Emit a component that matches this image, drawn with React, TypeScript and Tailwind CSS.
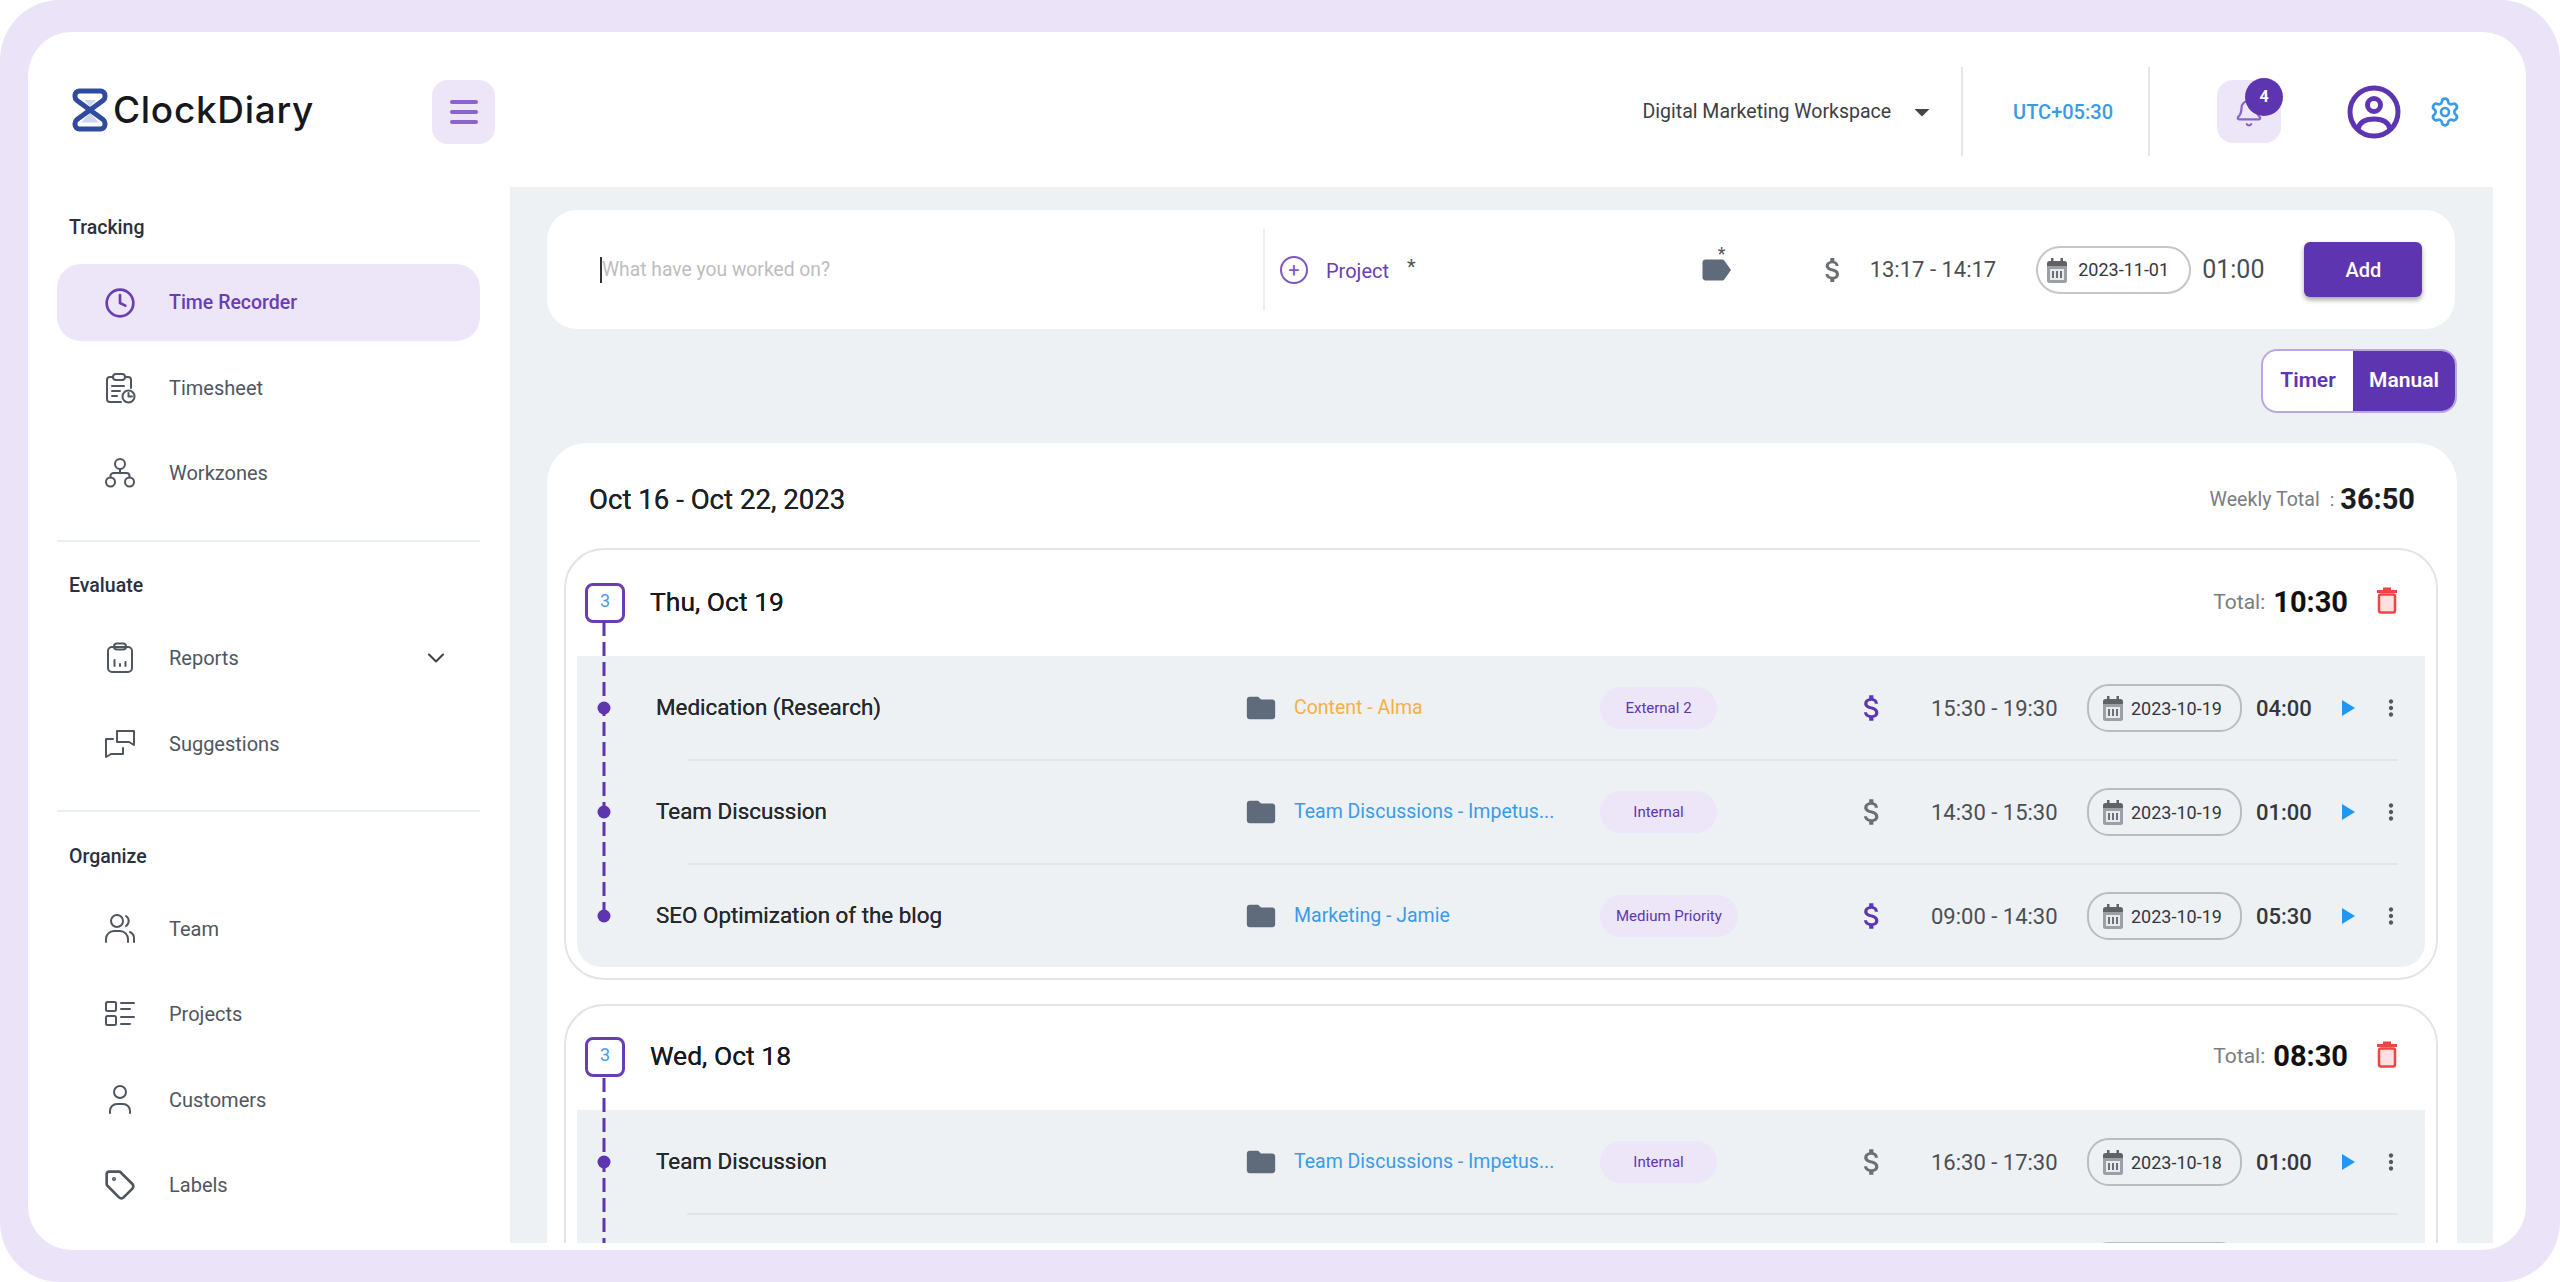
import { Bell, ChevronDown, Clock, Settings, Tag } from "lucide-react"
import { MdArrowDropDown, MdAttachMoney, MdFolder, MdLabel, MdMoreVert } from "react-icons/md"
import type { ReactNode } from "react"

function Logo() {
  return (
    <svg width="36" height="44" viewBox="0 0 36 44" fill="none">
      <path d="M12 12h12l-6 6.500ZM18 25l9 9.500H9Z" fill="#ccd6ee" />
      <path
        d="M7.500 3h21A4.500 4.500 0 0 1 33 7.500v1a5 5 0 0 1-1.700 3.700L4.700 31.800A5 5 0 0 0 3 35.500v1A4.500 4.500 0 0 0 7.500 41h21a4.500 4.500 0 0 0 4.500-4.500v-1a5 5 0 0 0-1.700-3.700L4.700 12.200A5 5 0 0 1 3 8.500v-1A4.500 4.500 0 0 1 7.500 3Z"
        stroke="#2f4a9e"
        strokeWidth="5"
        strokeLinejoin="round"
      />
    </svg>
  )
}

const stroke = { fill: "none", stroke: "currentColor", strokeWidth: 2, strokeLinecap: "round" as const, strokeLinejoin: "round" as const }

function TimesheetIcon() {
  return (
    <svg width="32" height="32" viewBox="0 0 32 32" {...stroke}>
      <path d="M9 5H6a3 3 0 0 0-3 3v19a3 3 0 0 0 3 3h11M21 5h3a3 3 0 0 1 3 3v8" />
      <rect x="9" y="2" width="12" height="6" rx="3" />
      <path d="M8 14h12M8 19h8M8 24h5" />
      <circle cx="24.500" cy="24.500" r="6" />
      <path d="M24.500 21v3.500h3.500" />
    </svg>
  )
}

function WorkzonesIcon() {
  return (
    <svg width="32" height="32" viewBox="0 0 32 32" {...stroke}>
      <circle cx="16" cy="7" r="5" />
      <circle cx="6.500" cy="25" r="4.500" />
      <circle cx="25.500" cy="25" r="4.500" />
      <path d="M16 12v4M6.500 20.500V19a3 3 0 0 1 3-3h13a3 3 0 0 1 3 3v1.500" />
    </svg>
  )
}

function ReportsIcon() {
  return (
    <svg width="32" height="32" viewBox="0 0 32 32" {...stroke}>
      <rect x="4" y="5" width="24" height="25" rx="4" />
      <rect x="10" y="1.500" width="12" height="6" rx="3" />
      <path d="M10.500 18v6M16 22v2M21.500 20v4" />
    </svg>
  )
}

function SuggestionsIcon() {
  return (
    <svg width="32" height="32" viewBox="0 0 32 32" {...stroke}>
      <path d="M13 3h17v14l-5-3H13Z" />
      <path d="M9 11H2v18l5-3h12v-6" />
    </svg>
  )
}

function TeamIcon() {
  return (
    <svg width="32" height="32" viewBox="0 0 32 32" {...stroke}>
      <circle cx="13" cy="8" r="6" />
      <path d="M2 29v-3a8 8 0 0 1 8-8h6a8 8 0 0 1 8 8v3M22 3a6 6 0 0 1 0 10M26 19a7 7 0 0 1 4 7v3" />
    </svg>
  )
}

function ProjectsIcon() {
  return (
    <svg width="32" height="32" viewBox="0 0 32 32" {...stroke}>
      <rect x="2" y="4" width="10" height="9" rx="1.500" />
      <rect x="2" y="18" width="10" height="9" rx="1.500" />
      <path d="M17 5h13M17 11h9M17 19h13M17 26h9" />
    </svg>
  )
}

function CustomerIcon() {
  return (
    <svg width="32" height="32" viewBox="0 0 32 32" {...stroke}>
      <circle cx="16" cy="8" r="6" />
      <path d="M6 29v-2a7 7 0 0 1 7-7h6a7 7 0 0 1 7 7v2" />
    </svg>
  )
}

function AvatarIcon() {
  return (
    <svg width="54" height="54" viewBox="0 0 54 54" fill="none" stroke="#5e35b1" strokeWidth="5">
      <circle cx="27" cy="27" r="24" />
      <circle cx="27" cy="20" r="6.500" />
      <path d="M11 44c1.500-7 8-10 16-10s14.500 3 16 10" />
    </svg>
  )
}

function CalendarIcon() {
  return (
    <svg width="20" height="26" viewBox="0 0 20 26" className="shrink-0">
      <path d="M4 1h2.500v3h7V1H16v3h1.500A2.500 2.500 0 0 1 20 6.500V9H0V6.500A2.500 2.500 0 0 1 2.500 4H4Z" fill="#5f6368" />
      <path d="M0 9h20v14.500a2.500 2.500 0 0 1-2.500 2.500h-15A2.500 2.500 0 0 1 0 23.500Z" fill="#9aa0a6" />
      <path d="M3 12h14v11H3Z" fill="#e8eaed" />
      <path d="M5 14h2v7H5ZM9 14h2v7H9ZM13 14h2v7h-2Z" fill="#6b7076" />
    </svg>
  )
}

function TrashIcon() {
  return (
    <svg width="22" height="28" viewBox="0 0 22 28">
      <path d="M7 1.500h8V4h6v3H1V4h6Z" fill="#ef4444" />
      <rect x="3" y="8.500" width="16" height="18" rx="2" fill="#fde0df" stroke="#ef4444" strokeWidth="2.500" />
    </svg>
  )
}

function NavItem({ icon, label, active, chevron }: { icon: ReactNode; label: string; active?: boolean; chevron?: boolean }) {
  return (
    <div
      className={
        active
          ? "flex h-[77px] items-center rounded-[24px] bg-[#ece6f8] pl-[47px] text-[#6a3db5]"
          : "flex h-[77px] items-center rounded-[24px] pl-[47px] text-[#50565f]"
      }
    >
      <span className="flex w-[32px] justify-center">{icon}</span>
      <span className={active ? "ml-[33px] text-[19.500px] leading-[28px] font-medium" : "ml-[33px] text-[20px] leading-[28px]"}>{label}</span>
      {chevron && <ChevronDown size={28} strokeWidth={1.8} className="mr-[30px] ml-auto text-[#444]" />}
    </div>
  )
}

function Sidebar() {
  return (
    <aside className="flex w-[482px] shrink-0 flex-col overflow-hidden pr-[30px] pl-[29px]">
      <div className="mt-[26px] mb-[21px] pl-[12px] text-[19.500px] leading-[30px] font-medium text-[#2a3040]">Tracking</div>
      <div className="flex flex-col gap-[8px]">
        <NavItem active icon={<Clock size={32} strokeWidth={2} />} label="Time Recorder" />
        <NavItem icon={<TimesheetIcon />} label="Timesheet" />
        <NavItem icon={<WorkzonesIcon />} label="Workzones" />
      </div>
      <div className="mt-[29px] h-[2px] bg-[#eceff1]" />
      <div className="mt-[29px] mb-[18px] pl-[12px] text-[19.500px] leading-[30px] font-medium text-[#2a3040]">Evaluate</div>
      <div className="flex flex-col gap-[9px]">
        <NavItem chevron icon={<ReportsIcon />} label="Reports" />
        <NavItem icon={<SuggestionsIcon />} label="Suggestions" />
      </div>
      <div className="mt-[28px] h-[2px] bg-[#eceff1]" />
      <div className="mt-[30px] mb-[18px] pl-[12px] text-[19.500px] leading-[30px] font-medium text-[#2a3040]">Organize</div>
      <div className="flex flex-col gap-[8.500px]">
        <NavItem icon={<TeamIcon />} label="Team" />
        <NavItem icon={<ProjectsIcon />} label="Projects" />
        <NavItem icon={<CustomerIcon />} label="Customers" />
        <NavItem icon={<Tag size={32} strokeWidth={2} />} label="Labels" />
      </div>
    </aside>
  )
}

function TopBar() {
  return (
    <header className="flex h-[155px] shrink-0 items-center pt-[4px] pr-[65px] pl-[44px]">
      <span className="-mt-[4px]">
        <Logo />
      </span>
      <span className="-mt-[4px] ml-[5px] w-[198px] font-['Inter',sans-serif] text-[37px] leading-none font-medium tracking-[0.7px] whitespace-nowrap text-[#16181d]">ClockDiary</span>
      <button className="ml-[121px] flex h-[64px] w-[63px] items-center justify-center rounded-[16px] bg-[#ece6f8]">
        <span className="flex w-[28px] flex-col gap-[6px]">
          <span className="h-[4px] rounded-full bg-[#8a63cc]" />
          <span className="h-[4px] rounded-full bg-[#8a63cc]" />
          <span className="h-[4px] rounded-full bg-[#8a63cc]" />
        </span>
      </button>
      <span className="ml-auto text-[19.500px] text-[#3c4043]">Digital Marketing Workspace</span>
      <MdArrowDropDown size={36} className="ml-[13px] text-[#444]" />
      <span className="ml-[21px] h-[89px] w-[2px] bg-[#e4e6e8]" />
      <span className="ml-[50px] text-[20px] font-medium text-[#3b9ae8]">UTC+05:30</span>
      <span className="ml-[35px] h-[89px] w-[2px] bg-[#e4e6e8]" />
      <div className="relative ml-[67px] flex h-[63px] w-[64px] items-center justify-center rounded-[16px] bg-[#ece6f8]">
        <Bell size={30} strokeWidth={1.8} className="mt-[2px] text-[#8a63cc]" />
        <span className="absolute -top-[2px] left-[28px] flex h-[38px] w-[38px] items-center justify-center rounded-full bg-[#5e35b1] text-[16px] font-bold text-white">4</span>
      </div>
      <span className="ml-[66px]">
        <AvatarIcon />
      </span>
      <Settings size={32} strokeWidth={2} className="ml-[28px] text-[#3b9ae8]" />
    </header>
  )
}

function DatePill({ date }: { date: string }) {
  return (
    <div className="flex h-[48px] w-[155px] shrink-0 items-center rounded-[22px] border-2 border-[#b9bcc0] pl-[14px]">
      <CalendarIcon />
      <span className="ml-[8px] text-[18px] text-[#33373b]">{date}</span>
    </div>
  )
}

function EntryBar() {
  return (
    <div className="mt-[23px] mr-[38px] ml-[37px] flex h-[119px] shrink-0 items-center rounded-[30px] bg-white pl-[53px] text-[#4a4e53]">
      <div className="flex w-[663px] items-center">
        <span className="h-[26px] w-[2px] bg-[#333]" />
        <span className="mt-[2px] text-[19.300px] text-[#bdbdbd]">What have you worked on?</span>
      </div>
      <span className="h-[81px] w-[2px] bg-[#eceef0]" />
      <span className="ml-[15px] flex h-[28px] w-[28px] items-center justify-center rounded-full border-2 border-[#7e57c2] text-[20px] leading-none text-[#7e57c2]">+</span>
      <span className="mt-[2px] ml-[18px] text-[20px] text-[#6a3db5]">Project</span>
      <span className="mb-[6px] ml-[18px] text-[20px] text-[#555]">*</span>
      <div className="relative ml-[282px]">
        <MdLabel size={36} className="text-[#5f6b7a]" />
        <span className="absolute -top-[12px] left-[20px] text-[18px] text-[#555]">*</span>
      </div>
      <MdAttachMoney size={32} className="ml-[83px] text-[#6b6f73]" />
      <span className="ml-[21px] text-[22px] whitespace-nowrap">13:17 - 14:17</span>
      <div className="ml-[40px] flex h-[48px] w-[155px] shrink-0 items-center rounded-[24px] border-2 border-[#c4c6c9] pl-[9px]">
        <CalendarIcon />
        <span className="ml-[11px] text-[18px] text-[#33373b]">2023-11-01</span>
      </div>
      <span className="ml-[11px] text-[25px]">01:00</span>
      <button className="ml-[40px] h-[55px] w-[118px] rounded-[6px] bg-[#5e35b1] text-[20px] font-medium text-white shadow-[0_3px_5px_rgba(0,0,0,0.35)]">Add</button>
    </div>
  )
}

function ModeToggle() {
  return (
    <div className="mt-[20px] mr-[36px] flex h-[64px] w-[196px] shrink-0 self-end overflow-hidden rounded-[16px] border-2 border-[#b9a7e0] bg-white text-[21px] font-semibold">
      <span className="flex w-[90px] items-center justify-center text-[#5e35b1]">Timer</span>
      <span className="flex flex-1 items-center justify-center bg-[#5e35b1] text-white">Manual</span>
    </div>
  )
}

type Entry = { title: string; project: string; projectColor: string; tag: string; billable: boolean; time: string; date: string; duration: string }

function EntryRow({ e }: { e: Entry }) {
  return (
    <div className="flex h-[102px] items-center">
      <span className="ml-[79px] w-[591px] shrink-0 text-[22.400px] text-[#26292c] [text-shadow:0_0_0.5px_#26292c]">{e.title}</span>
      <MdFolder size={34} className="-ml-[3px] shrink-0 text-[#5f6b7a]" />
      <span className={"ml-[16px] w-[306px] shrink-0 text-[19.500px] " + e.projectColor}>{e.project}</span>
      <div className="w-[257px] shrink-0">
        <span className="inline-flex h-[42px] min-w-[117px] items-center justify-center rounded-[21px] bg-[#ece6f8] px-[16px] text-[15px] text-[#5e35b1]">{e.tag}</span>
      </div>
      <MdAttachMoney size={34} className={e.billable ? "-ml-[2px] shrink-0 text-[#5e35b1]" : "-ml-[2px] shrink-0 text-[#6b6f73]"} />
      <span className="ml-[42px] w-[128px] shrink-0 text-[22px] whitespace-nowrap text-[#4a4e53]">{e.time}</span>
      <span className="ml-[28px]">
        <DatePill date={e.date} />
      </span>
      <span className="ml-[14px] w-[56px] shrink-0 text-[22px] font-medium text-[#33373b]">{e.duration}</span>
      <svg width="13" height="16" viewBox="0 0 13 16" className="ml-[30px] shrink-0">
        <path d="M0 0 13 8 0 16Z" fill="#2196f3" />
      </svg>
      <MdMoreVert size={26} className="ml-[23px] shrink-0 text-[#55595e]" />
    </div>
  )
}

function Timeline({ dots, height }: { dots: number[]; height: number }) {
  return (
    <svg width="14" height={height + 8} className="absolute top-[72px] left-[31px]">
      <line x1="7" y1="0" x2="7" y2={height} stroke="#5e35b1" strokeWidth="3" strokeDasharray="14 6" />
      {dots.map((d) => (
        <circle key={d} cx="7" cy={d} r="6.500" fill="#5e35b1" />
      ))}
    </svg>
  )
}

const thuEntries: Entry[] = [
  { title: "Medication (Research)", project: "Content - Alma", projectColor: "text-[#f5b042]", tag: "External 2", billable: true, time: "15:30 - 19:30", date: "2023-10-19", duration: "04:00" },
  { title: "Team Discussion", project: "Team Discussions - Impetus...", projectColor: "text-[#3b9ae8]", tag: "Internal", billable: false, time: "14:30 - 15:30", date: "2023-10-19", duration: "01:00" },
  { title: "SEO Optimization of the blog", project: "Marketing - Jamie", projectColor: "text-[#3b9ae8]", tag: "Medium Priority", billable: true, time: "09:00 - 14:30", date: "2023-10-19", duration: "05:30" },
]

const wedEntry: Entry = { title: "Team Discussion", project: "Team Discussions - Impetus...", projectColor: "text-[#3b9ae8]", tag: "Internal", billable: false, time: "16:30 - 17:30", date: "2023-10-18", duration: "01:00" }

function DayHeader({ title, total }: { title: string; total: string }) {
  return (
    <>
      <span className="ml-[19px] flex h-[40px] w-[40px] shrink-0 items-start justify-center rounded-[8px] border-[3px] border-[#6a3db5] bg-white text-[18px] leading-[30px] text-[#4d9be8]">3</span>
      <span className="ml-[25px] text-[26.500px] leading-[38px] text-[#17191c] [text-shadow:0_0_0.5px_#17191c]">{title}</span>
      <span className="ml-auto text-[21px] leading-[38px] text-[#7a7d80]">Total:</span>
      <span className="ml-[8px] text-[29px] leading-[38px] font-bold text-[#111]">{total}</span>
      <span className="mt-[3px] mr-[38px] ml-[28px]">
        <TrashIcon />
      </span>
    </>
  )
}

export default function App() {
  return (
    <div className="h-[1282px] w-[2560px] overflow-hidden bg-white font-['Roboto',sans-serif]">
      <div className="h-full rounded-[60px] bg-[#ebe4f8] pt-[32px] pr-[34px] pb-[32px] pl-[28px]">
        <div className="flex h-full flex-col overflow-hidden rounded-[44px] bg-white">
          <TopBar />
          <div className="flex min-h-0 flex-1">
            <Sidebar />
            <main className="mr-[33px] mb-[7px] flex min-h-0 flex-1 flex-col overflow-hidden bg-[#edf1f4]">
              <EntryBar />
              <ModeToggle />
              <section className="mt-[30px] mr-[36px] ml-[37px] min-h-0 flex-1 overflow-hidden rounded-t-[40px] bg-white">
                <div className="flex h-[105px] items-center pt-[9px] pr-[42px] pl-[42px]">
                  <span className="text-[27.600px] text-[#1d2024] [text-shadow:0_0_0.5px_#1d2024]">Oct 16 - Oct 22, 2023</span>
                  <span className="ml-auto text-[19.600px] text-[#7a7d80]">Weekly Total</span>
                  <span className="mr-[6px] ml-[10px] text-[19px] text-[#7a7d80]">:</span>
                  <span className="text-[29px] font-bold text-[#1b1d20]">36:50</span>
                </div>
                <div className="relative mr-[19px] ml-[17px] rounded-[40px] border-2 border-[#e2e4e6] pb-[11px]">
                  <div className="flex h-[106px] items-start pt-[33px]">
                    <DayHeader title="Thu, Oct 19" total="10:30" />
                  </div>
                  <div className="mx-[11px] rounded-b-[24px] bg-[#eef1f4] pt-[1px]">
                    {thuEntries.map((e, i) => (
                      <div key={e.title}>
                        <EntryRow e={e} />
                        {i < 2 && <div className="mr-[27px] ml-[110px] h-[2px] bg-[#e2e5e8]" />}
                      </div>
                    ))}
                  </div>
                  <Timeline dots={[86, 190, 294]} height={294} />
                </div>
                <div className="relative mt-[24px] mr-[19px] ml-[17px] rounded-t-[40px] border-2 border-[#e2e4e6]">
                  <div className="flex h-[104px] items-start pt-[31px]">
                    <DayHeader title="Wed, Oct 18" total="08:30" />
                  </div>
                  <div className="mx-[11px] bg-[#eef1f4] pt-[1px]">
                    <EntryRow e={wedEntry} />
                    <div className="mr-[27px] ml-[110px] h-[2px] bg-[#e2e5e8]" />
                    <div className="flex h-[102px] items-center pl-[1510px]">
                      <DatePill date="2023-10-18" />
                    </div>
                  </div>
                  <Timeline dots={[84]} height={200} />
                </div>
              </section>
            </main>
          </div>
        </div>
      </div>
    </div>
  )
}
